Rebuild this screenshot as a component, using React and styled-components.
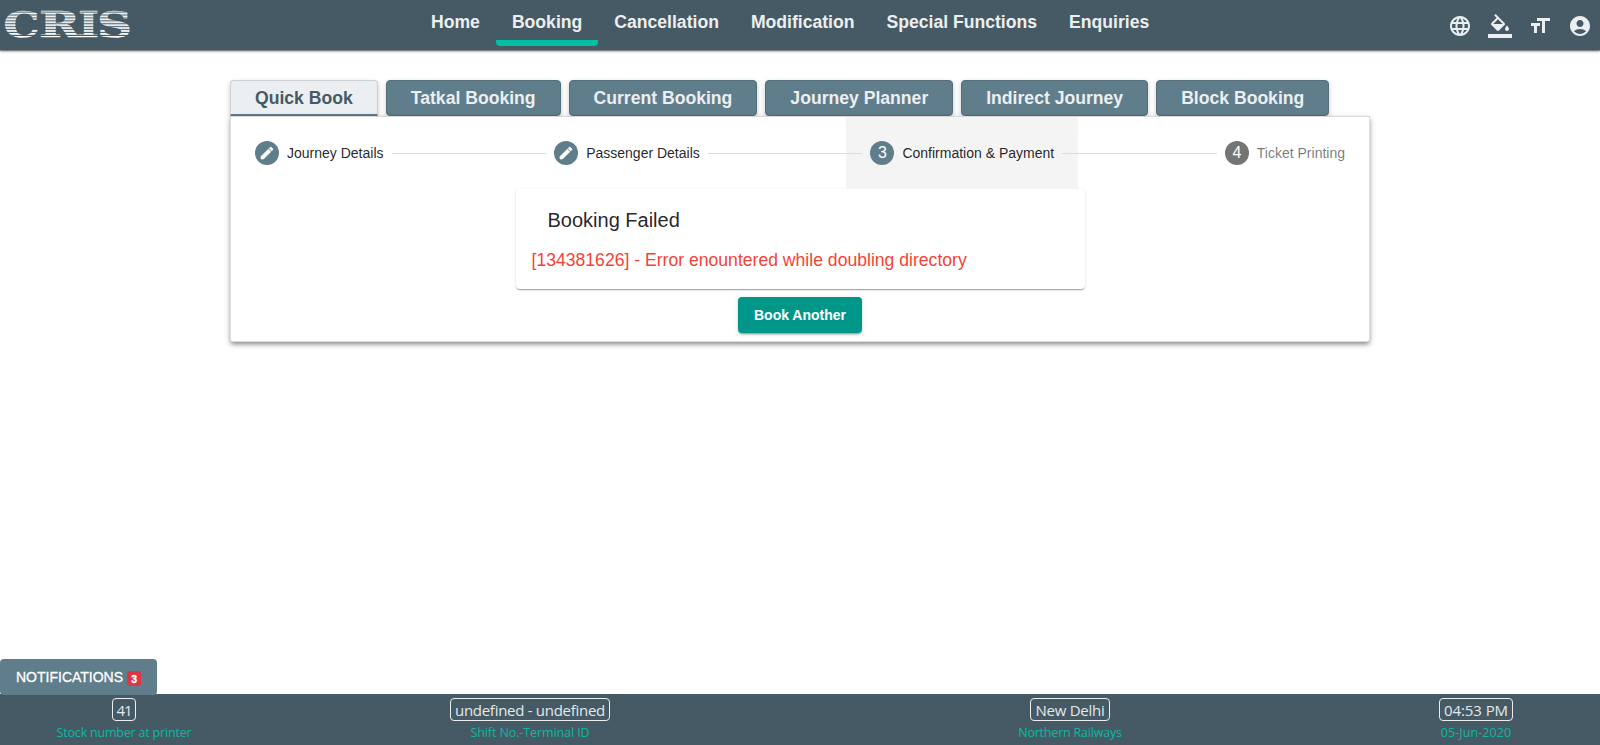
import React from "react";
import styled, { createGlobalStyle } from "styled-components";
import { MdLanguage, MdFormatSize, MdAccountCircle } from "react-icons/md";

const GlobalStyle = createGlobalStyle`
  * { box-sizing: border-box; }
  body {
    margin: 0;
    background: #fff;
    color: rgba(0, 0, 0, 0.87);
    font-family: "Liberation Sans", Arial, sans-serif;
  }
`;

const Page = styled.div`
  display: flex;
  flex-direction: column;
  height: 745px;
  overflow: hidden;
`;

const Header = styled.header`
  display: flex;
  flex: none;
  height: 50px;
  background: #455a64;
  color: #eceff1;
  box-shadow: 0 1px 3px rgba(0, 0, 0, 0.45), 0 1px 1px rgba(0, 0, 0, 0.3);
`;

const Logo = styled.svg`
  flex: none;
  width: 134px;
  height: 50px;
  font-family: "DejaVu Serif", serif;
  font-weight: 700;
  font-size: 36px;
`;

const Nav = styled.nav`
  display: flex;
  margin-left: 281px;
`;

const NavLink = styled.a`
  height: 46px;
  padding: 12px 16px 0;
  border-bottom: 6px solid ${(p) => (p.$active ? "#00bfa5" : "transparent")};
  border-radius: 0 0 4px 4px;
  font-size: 17.6px;
  font-weight: 700;
  line-height: 20px;
  white-space: nowrap;
`;

const Tools = styled.div`
  display: flex;
  gap: 16px;
  margin-left: auto;
  padding: 14px 8px 0 0;
  svg {
    width: 24px;
    height: 24px;
    fill: currentColor;
  }
`;

const Main = styled.main`
  flex: 1;
  width: 1140px;
  margin: 0 auto;
  padding-top: 30px;
`;

const Tabs = styled.div`
  display: flex;
  gap: 8px;
  height: 36px;
`;

const Tab = styled.button`
  padding: ${(p) => (p.$active ? "1px 24px 0" : "0 24px")};
  border: 1px solid ${(p) => (p.$active ? "#cdd1d4" : "#546e7a")};
  border-bottom: ${(p) => (p.$active ? "2px solid #607d8b" : "1px solid #546e7a")};
  border-radius: ${(p) => (p.$active ? "4px 4px 0 0" : "4px")};
  background: ${(p) => (p.$active ? "#eceff1" : "#607d8b")};
  color: ${(p) => (p.$active ? "#455a64" : "#eceff1")};
  box-shadow: 0 2px 5px rgba(0, 0, 0, 0.22);
  font: 700 17.6px "Liberation Sans", Arial, sans-serif;
  white-space: nowrap;
`;

const Panel = styled.section`
  position: relative;
  height: 226px;
  border: 1px solid #dedede;
  border-top-color: #d8d8d8;
  border-radius: 0 0 3px 3px;
  background: #fff;
  box-shadow: 0 3px 4px -1px rgba(0, 0, 0, 0.35), 0 2px 6px rgba(0, 0, 0, 0.2);
`;

const Stepper = styled.div`
  display: flex;
  align-items: center;
`;

const Step = styled.div`
  display: flex;
  align-items: center;
  gap: 8px;
  height: 72px;
  padding: 0 24px;
  background: ${(p) => (p.$active ? "#f4f4f4" : "transparent")};
  color: ${(p) => (p.$pending ? "rgba(0,0,0,.54)" : "rgba(0,0,0,.87)")};
  font-size: 14px;
  white-space: nowrap;
`;

const StepIcon = styled.span`
  display: flex;
  align-items: center;
  justify-content: center;
  width: 24px;
  height: 24px;
  border-radius: 50%;
  background: ${(p) => (p.$pending ? "#757575" : "#607d8b")};
  color: #fff;
  font-size: 16px;
  line-height: 24px;
  svg {
    width: 16px;
    height: 16px;
    fill: currentColor;
    stroke: currentColor;
    stroke-width: 0.9;
  }
`;

const StepLine = styled.span`
  flex: 1;
  height: 1px;
  margin: 0 -16px;
  background: #dcdcdc;
  z-index: 1;
`;

const ResultCard = styled.article`
  width: 569px;
  height: 100px;
  margin: 0 auto;
  padding: 19px 16px;
  border-radius: 4px;
  background: #fff;
  box-shadow: 0 2px 1px -1px rgba(0, 0, 0, 0.2), 0 1px 1px rgba(0, 0, 0, 0.14),
    0 1px 3px rgba(0, 0, 0, 0.12);
`;

const ResultTitle = styled.h2`
  margin: 0 16px 16px;
  font-size: 20px;
  font-weight: 400;
  line-height: 24px;
`;

const ErrorText = styled.p`
  margin: 0;
  color: #f44336;
  font-size: 17.6px;
  line-height: 24px;
`;

const Action = styled.button`
  display: block;
  width: 124px;
  height: 36px;
  margin: 8px auto 0;
  padding: 0;
  border: 0;
  border-radius: 4px;
  background: #009688;
  color: #fff;
  box-shadow: 0 3px 1px -2px rgba(0, 0, 0, 0.2), 0 2px 2px rgba(0, 0, 0, 0.14),
    0 1px 5px rgba(0, 0, 0, 0.12);
  font: 700 14px "Liberation Sans", Arial, sans-serif;
`;

const Notifications = styled.button`
  position: relative;
  display: flex;
  align-items: center;
  align-self: flex-start;
  gap: 4px;
  width: 157px;
  height: 36px;
  margin-bottom: -1px;
  padding: 0 0 0 16px;
  border: 0;
  border-radius: 4px;
  background: #607d8b;
  color: #fff;
  font: 500 14px "Liberation Sans", Arial, sans-serif;
  -webkit-text-stroke: 0.3px #fff;
`;

const Badge = styled.span`
  width: 14px;
  height: 15px;
  margin-top: 3px;
  border-radius: 3px;
  background: #dc3545;
  font-size: 10.5px;
  font-weight: 700;
  line-height: 16px;
  text-align: center;
`;

const Footer = styled.footer`
  display: grid;
  grid-template-columns: 248px 1fr 1fr 248px;
  flex: none;
  height: 51px;
  padding-top: 4px;
  background: #455a64;
  font-family: "Open Sans", "Noto Sans", sans-serif;
`;

const Status = styled.div`
  display: flex;
  flex-direction: column;
  align-items: center;
  padding: ${(p) => p.$pad || 0};
`;

const StatusValue = styled.span`
  height: 23px;
  padding: 0 4px;
  border: 1px solid #eceff1;
  border-radius: 4px;
  color: #e4e8ea;
  font-size: 15px;
  line-height: 22px;
  letter-spacing: ${(p) => p.$track}px;
  white-space: nowrap;
`;

const StatusLabel = styled.span`
  margin-top: 3px;
  color: #0cb8a2;
  font-size: 12.5px;
  line-height: 18px;
  letter-spacing: ${(p) => p.$track}px;
  white-space: nowrap;
`;

const LOGO_LETTERS = [
  { char: "C", x: 3.5, width: 36 },
  { char: "R", x: 39, width: 41 },
  { char: "I", x: 78, width: 21 },
  { char: "S", x: 97, width: 35 },
];

function CrisLogo() {
  return (
    <Logo viewBox="0 0 134 50" role="img" aria-label="CRIS">
      <defs>
        <pattern id="stripes" y="9.7" width="134" height="2.92" patternUnits="userSpaceOnUse">
          <rect width="134" height="1.75" fill="#fff" />
        </pattern>
      </defs>
      {LOGO_LETTERS.map((l) => (
        <text
          key={l.char}
          x={l.x}
          y="36.5"
          textLength={l.width}
          lengthAdjust="spacingAndGlyphs"
          fill="url(#stripes)"
          stroke="url(#stripes)"
          strokeWidth="0.6"
        >
          {l.char}
        </text>
      ))}
    </Logo>
  );
}

function FillIcon() {
  return (
    <svg viewBox="0 0 24 24">
      <path d="M16.56 8.94L7.62 0 6.21 1.41l2.38 2.38-5.15 5.15c-.59.59-.59 1.54 0 2.12l5.5 5.5c.29.29.68.44 1.06.44s.77-.15 1.06-.44l5.5-5.5c.59-.58.59-1.53 0-2.12zM5.21 10L10 5.21 14.79 10H5.21zM19 11.5s-2 2.17-2 3.5c0 1.1.9 2 2 2s2-.9 2-2c0-1.33-2-3.5-2-3.5z" />
      <path d="M0 20h24v4H0z" />
    </svg>
  );
}

function PencilIcon() {
  return (
    <svg viewBox="0 0 24 24">
      <path d="M3 17.25V21h3.75L17.81 9.94l-3.75-3.75L3 17.25zM20.71 7.04c.39-.39.39-1.02 0-1.41l-2.34-2.34c-.39-.39-1.02-.39-1.41 0l-1.83 1.83 3.75 3.75 1.83-1.83z" />
    </svg>
  );
}

const NAV = ["Home", "Booking", "Cancellation", "Modification", "Special Functions", "Enquiries"];
const TABS = ["Quick Book", "Tatkal Booking", "Current Booking", "Journey Planner", "Indirect Journey", "Block Booking"];
const STEPS = [
  { label: "Journey Details", done: true },
  { label: "Passenger Details", done: true },
  { label: "Confirmation & Payment", active: true },
  { label: "Ticket Printing", pending: true },
];
const STATUS = [
  { value: "41", track: -1.2, label: "Stock number at printer", labelTrack: -0.2 },
  { value: "undefined - undefined", track: -0.28, label: "Shift No.-Terminal ID", labelTrack: -0.1, pad: "0 0 0 12px" },
  { value: "New Delhi", track: -0.25, label: "Northern Railways", labelTrack: -0.2, pad: "0 12px 0 0" },
  { value: "04:53 PM", track: -0.08, label: "05-Jun-2020", labelTrack: 0.1 },
];

export default function App() {
  return (
    <Page>
      <GlobalStyle />
      <Header>
        <CrisLogo />
        <Nav>
          {NAV.map((n) => (
            <NavLink key={n} $active={n === "Booking"}>{n}</NavLink>
          ))}
        </Nav>
        <Tools>
          <MdLanguage />
          <FillIcon />
          <MdFormatSize />
          <MdAccountCircle />
        </Tools>
      </Header>
      <Main>
        <Tabs>
          {TABS.map((t) => (
            <Tab key={t} $active={t === "Quick Book"}>{t}</Tab>
          ))}
        </Tabs>
        <Panel>
          <Stepper>
            {STEPS.map((s, i) => (
              <React.Fragment key={s.label}>
                {i > 0 && <StepLine />}
                <Step $active={s.active} $pending={s.pending}>
                  <StepIcon $pending={s.pending}>{s.done ? <PencilIcon /> : i + 1}</StepIcon>
                  {s.label}
                </Step>
              </React.Fragment>
            ))}
          </Stepper>
          <ResultCard>
            <ResultTitle>Booking Failed</ResultTitle>
            <ErrorText>[134381626] - Error enountered while doubling directory</ErrorText>
          </ResultCard>
          <Action>Book Another</Action>
        </Panel>
      </Main>
      <Notifications>
        NOTIFICATIONS <Badge>3</Badge>
      </Notifications>
      <Footer>
        {STATUS.map((s) => (
          <Status key={s.label} $pad={s.pad}>
            <StatusValue $track={s.track}>{s.value}</StatusValue>
            <StatusLabel $track={s.labelTrack}>{s.label}</StatusLabel>
          </Status>
        ))}
      </Footer>
    </Page>
  );
}
